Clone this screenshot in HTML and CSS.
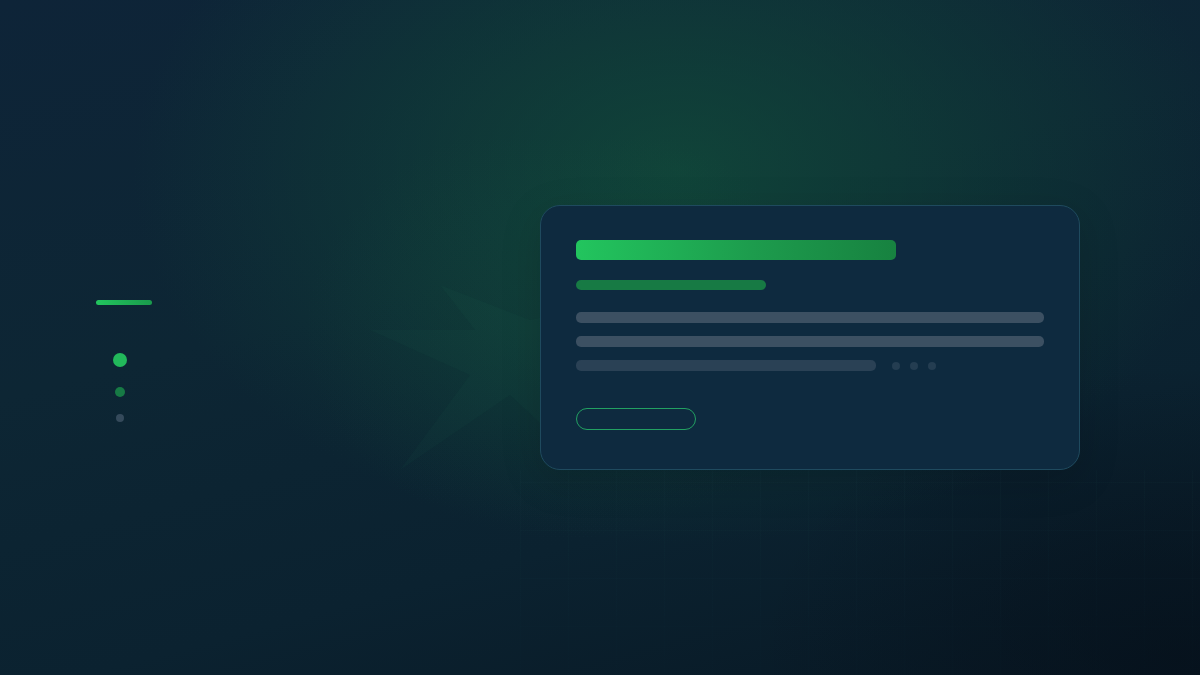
FILE: index.html
```html
<!DOCTYPE html>
<html>
<head>
<meta charset="utf-8">
<link rel="stylesheet" href="styles.css">
</head>
<body>
<div class="scene">
  <div class="glow"></div>
  <div class="grid"></div>
  <svg class="star" width="400" height="360" viewBox="0 0 400 360">
    <polygon points="110,115 200,150 300,130 225,195 250,290 180,225 70,300 140,205 40,160 145,160" fill="#2a8a5c" opacity="0.05"/>
  </svg>
  <div class="layout">
    <aside class="side">
      <div class="side-bar"></div>
      <div class="dots">
        <span class="d d1"></span>
        <span class="d d2"></span>
        <span class="d d3"></span>
      </div>
    </aside>
    <section class="card">
      <div class="bar title"></div>
      <div class="bar sub"></div>
      <div class="bar line"></div>
      <div class="bar line"></div>
      <div class="row">
        <div class="bar short"></div>
        <div class="typing"><i></i><i></i><i></i></div>
      </div>
      <div class="btn"></div>
    </section>
  </div>
</div>
</body>
</html>
```
FILE: styles.css
```css
html, body { margin: 0; padding: 0; }
body { width: 1200px; height: 675px; overflow: hidden; background: #0b1f30; }
.scene {
  position: relative;
  width: 1200px; height: 675px;
  overflow: hidden;
  background:
    radial-gradient(ellipse 760px 520px at 680px 170px, rgba(17,75,58,0.8), rgba(17,75,58,0) 72%),
    radial-gradient(ellipse 600px 420px at 1180px 660px, rgba(5,14,24,0.6), rgba(5,14,24,0) 70%),
    linear-gradient(165deg, #0e2438 0%, #0d2634 40%, #0b2230 70%, #081824 100%);
}
.glow {
  position: absolute; left: 280px; top: 140px; width: 520px; height: 420px;
  background: radial-gradient(ellipse at 55% 45%, rgba(25,110,70,0.14), rgba(25,110,70,0) 65%);
}
.grid {
  position: absolute; left: 520px; top: 470px; width: 680px; height: 205px;
  background-image:
    repeating-linear-gradient(90deg, rgba(80,140,140,0.035) 0 1px, transparent 1px 48px),
    repeating-linear-gradient(0deg, rgba(80,140,140,0.03) 0 1px, transparent 1px 48px);
  -webkit-mask-image: linear-gradient(180deg, #000, rgba(0,0,0,0.3));
}
.star { position: absolute; left: 330px; top: 170px; }
.layout {
  position: relative;
  display: flex;
  align-items: flex-start;
  height: 675px;
}
.side {
  width: 56px;
  margin: 300px 0 0 96px;
  display: flex; flex-direction: column;
}
.side-bar {
  height: 5px; border-radius: 3px;
  background: linear-gradient(90deg, #22c55e, #1a9a4c);
}
.dots {
  display: flex; flex-direction: column; align-items: center;
  width: 48px;
  margin-top: 48px;
}
.d { display: block; border-radius: 50%; }
.d1 { width: 14px; height: 14px; background: #22b95b; }
.d2 { width: 10px; height: 10px; background: #177a45; margin-top: 20px; }
.d3 { width: 8px; height: 8px; background: #354a5b; margin-top: 17px; }
.card {
  margin: 205px 0 0 388px;
  width: 468px;
  height: 227px;
  padding: 34px 35px 2px 35px;
  background: #0e2a3f;
  border: 1px solid #1f4a5e;
  border-radius: 20px;
  display: flex; flex-direction: column;
  box-shadow: 0 10px 40px rgba(0,0,0,0.15);
}
.bar { border-radius: 5px; }
.title {
  width: 320px; height: 20px; border-radius: 5px;
  background: linear-gradient(90deg, #22c55e, #1d9c4d 55%, #178240);
}
.sub { width: 190px; height: 10px; margin-top: 20px; background: #177a44; }
.line { width: 468px; height: 11px; margin-top: 22px; background: #3c5062; }
.line + .line { margin-top: 13px; }
.row { display: flex; align-items: center; margin-top: 13px; }
.short { width: 300px; height: 11px; background: #2a4155; }
.typing { display: flex; gap: 10px; margin-left: 16px; }
.typing i { display: block; width: 8px; height: 8px; border-radius: 50%; background: #243d51; }
.btn {
  margin-top: 37px;
  width: 118px; height: 20px;
  border: 1.5px solid #22a062;
  border-radius: 12px;
}
```
